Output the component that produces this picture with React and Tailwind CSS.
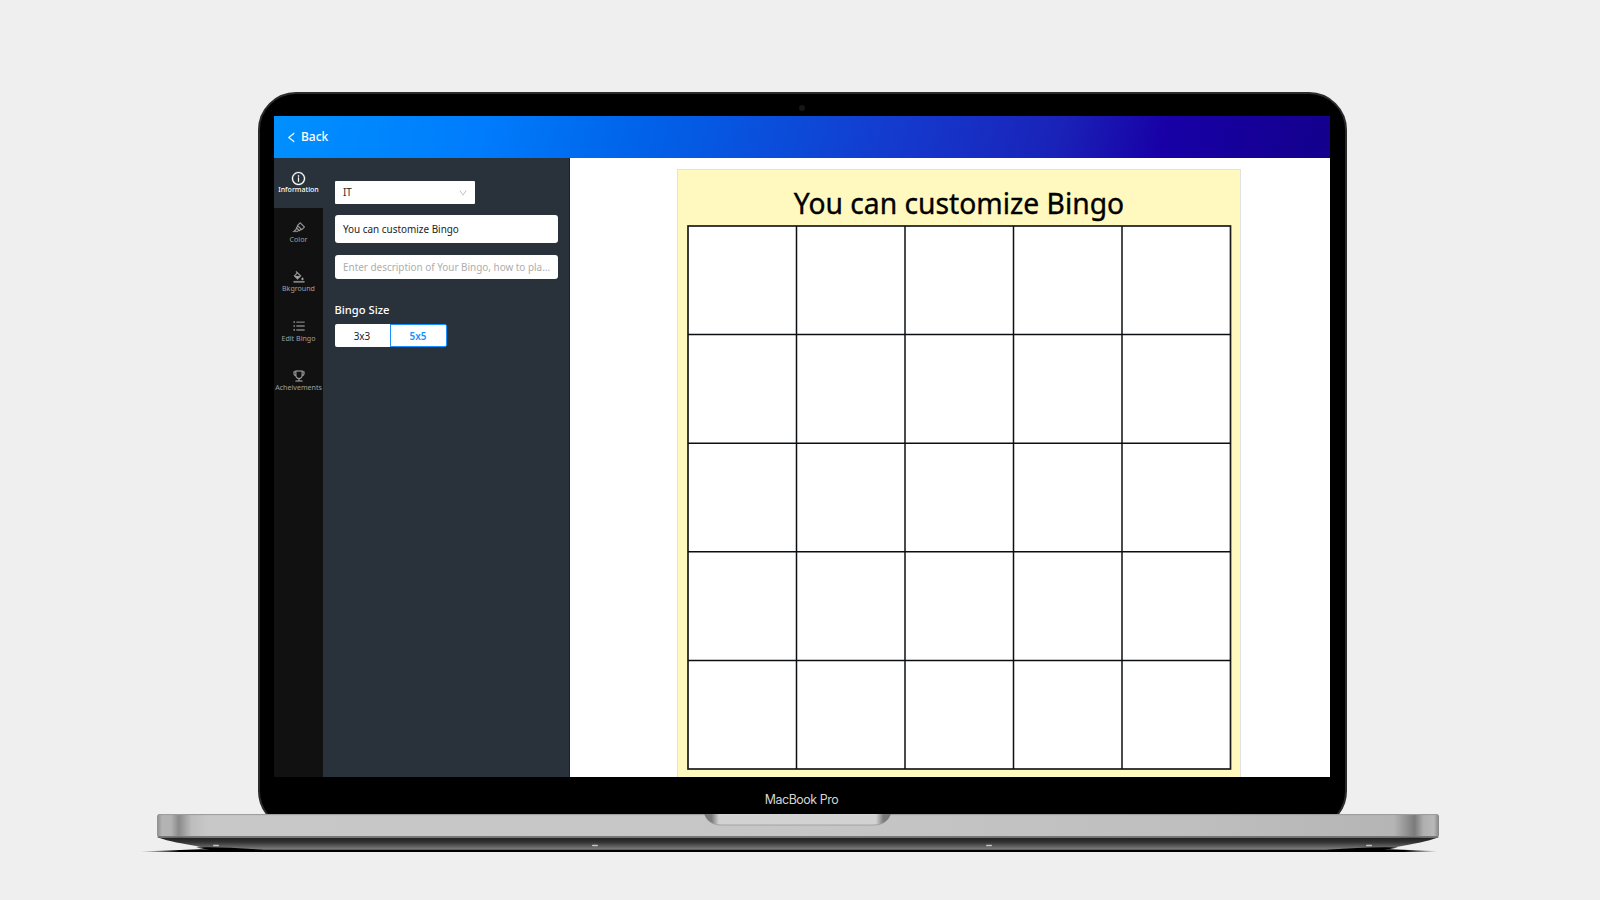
import {
  AiOutlineInfoCircle,
  AiOutlineHighlight,
  AiOutlineBgColors,
  AiOutlineUnorderedList,
  AiOutlineTrophy,
  AiOutlineLeft,
  AiOutlineDown,
} from "react-icons/ai";

const tabs = [
  { label: "Information", Icon: AiOutlineInfoCircle, active: true },
  { label: "Color", Icon: AiOutlineHighlight },
  { label: "Bkground", Icon: AiOutlineBgColors },
  { label: "Edit Bingo", Icon: AiOutlineUnorderedList },
  { label: "Acheivements", Icon: AiOutlineTrophy },
];

function Tab({ label, Icon, active }) {
  return (
    <button
      className={
        active
          ? "flex h-[49.5px] w-full shrink-0 flex-col items-center bg-[#29313b] pt-[12.5px] font-medium text-white"
          : "flex h-[49.5px] w-full shrink-0 flex-col items-center pt-[12.5px] text-[#a0a0a0]"
      }
    >
      <Icon className={active ? "size-[15px] shrink-0 stroke-white stroke-[20px]" : "size-[14px] shrink-0 stroke-[#a0a0a0] stroke-[12px]"} />
      <span className={active ? "-mt-[0.5px] text-[7px] leading-[10px] whitespace-nowrap" : "-mt-[0.5px] text-[7.1px] leading-[10px] whitespace-nowrap"}>
        {label}
      </span>
    </button>
  );
}

function Sidebar() {
  return <nav className="flex w-[49px] shrink-0 flex-col bg-[#111111]">{tabs.map((t) => <Tab key={t.label} {...t} />)}</nav>;
}

function Panel() {
  return (
    <section className="flex w-[246.5px] shrink-0 flex-col items-start border-r border-[#1a222c] bg-[#29313b] pt-[23px] pl-[11.5px] text-[9.92px] text-[#222222]">
      <div className="flex h-[23px] w-[140px] items-center justify-between rounded-[1px] bg-white pr-[7px] pl-[8.5px]">
        <span>IT</span>
        <AiOutlineDown className="size-[10px] text-[#b5b5b5]" />
      </div>
      <div className="mt-[11px] flex h-[28px] w-[223px] items-center rounded-[3px] bg-white px-[8.5px] pt-px">You can customize Bingo</div>
      <div className="mt-[12px] flex h-[24px] w-[223px] items-center rounded-[3px] bg-white px-[8.5px] pt-px whitespace-nowrap text-[#adadad]">
        Enter description of Your Bingo, how to pla...
      </div>
      <h2 className="mt-[23px] text-[11.2px] leading-[16px] font-medium text-white">Bingo Size</h2>
      <div className="mt-[6px] flex h-[23px] w-[112px]">
        <button className="flex flex-1 items-center justify-center rounded-l-[2px] bg-white pt-px">3x3</button>
        <button className="flex w-[57px] items-center justify-center rounded-r-[2px] border border-[#1890ff] bg-white pt-px font-semibold text-[#1890ff]">
          5x5
        </button>
      </div>
    </section>
  );
}

function BingoCard() {
  return (
    <div className="mt-[11px] ml-[107.5px] h-[620px] w-[564px] shrink-0 border border-[#e2e2e2] bg-[#fff8bf]">
      <h1 className="flex h-[55px] items-center justify-center pt-[12px] text-[28.25px] whitespace-nowrap text-black [-webkit-text-stroke:0.35px_black]">
        You can customize Bingo
      </h1>
      <svg className="ml-[9px] block" width="545" height="545" viewBox="0 0 545 545">
        <rect x="1" y="1" width="542.5" height="543" fill="#fff" stroke="#1c1c1c" strokeWidth="1.7" />
        {[1, 2, 3, 4].map((i) => (
          <g key={i} stroke="#0c0f12" strokeWidth="1.5">
            <path d={`M${1 + i * 108.5} 1V544`} />
            <path d={`M1 ${1 + i * 108.6}H543.5`} />
          </g>
        ))}
      </svg>
    </div>
  );
}

function Base() {
  return (
    <svg className="ml-[140px] block shrink-0" width="1310" height="42" viewBox="0 0 1310 42">
      <defs>
        <linearGradient id="metal" x1="17" x2="1299" y1="0" y2="0" gradientUnits="userSpaceOnUse">
          <stop offset="0" stopColor="#8f8f8f" />
          <stop offset=".004" stopColor="#b4b4b4" />
          <stop offset=".011" stopColor="#b2b2b2" />
          <stop offset=".017" stopColor="#8a8a8a" />
          <stop offset=".027" stopColor="#bdbdbd" />
          <stop offset=".04" stopColor="#c8c8c8" />
          <stop offset=".5" stopColor="#c6c6c6" />
          <stop offset=".8" stopColor="#bfbfbf" />
          <stop offset=".965" stopColor="#b5b5b5" />
          <stop offset=".981" stopColor="#7b7b7b" />
          <stop offset=".988" stopColor="#b0b0b0" />
          <stop offset=".996" stopColor="#b8b8b8" />
          <stop offset="1" stopColor="#858585" />
        </linearGradient>
        <linearGradient id="under" x1="0" x2="0" y1="0" y2="1">
          <stop offset="0" stopColor="#1d1d1d" />
          <stop offset=".4" stopColor="#333" />
          <stop offset="1" stopColor="#868686" />
        </linearGradient>
        <linearGradient id="notch" x1="0" x2="1" y1="0" y2="0">
          <stop offset="0" stopColor="#777" />
          <stop offset=".04" stopColor="#7c7c7c" />
          <stop offset=".08" stopColor="#d2d2d2" />
          <stop offset=".92" stopColor="#d2d2d2" />
          <stop offset=".96" stopColor="#7c7c7c" />
          <stop offset="1" stopColor="#777" />
        </linearGradient>
        <linearGradient id="shadow" x1="0" x2="1310" y1="0" y2="0" gradientUnits="userSpaceOnUse">
          <stop offset="0" stopColor="#000" stopOpacity="0" />
          <stop offset=".03" stopColor="#000" />
          <stop offset=".965" stopColor="#000" />
          <stop offset=".99" stopColor="#000" stopOpacity="0" />
        </linearGradient>
      </defs>
      <path d="M17 23H1299Q1290 27 1262 32L1240 36H72L56 32Q26 27 17 23Z" fill="url(#under)" />
      <path d="M0 37.4L60 35.2L120 35.8H1190L1250 35.2L1308 37.4V38H0Z" fill="url(#shadow)" />
      <path d="M56 33.4Q84 32.6 122 35.8L130 38H70V36Z" fill="#000" />
      <path d="M1258 33.4Q1226 32.6 1188 35.8L1180 38H1244V36Z" fill="#000" />
      <path d="M17 2Q17 .4 19 .4H1297Q1299 .4 1299 2V21Q1299 23.4 1296 23.4H20Q17 23.4 17 21Z" fill="url(#metal)" />
      <path d="M18 .6H1298" stroke="#999" />
      <path d="M18 22.7H1298" stroke="#777" strokeWidth="1.2" />
      <path d="M564 0H751Q747 11 734 11H581Q568 11 564 0Z" fill="url(#notch)" />
      <path d="M566 4Q571 11 581 11H734Q744 11 749 4" fill="none" stroke="#999" strokeWidth=".8" />
      {[76, 455, 849, 1229].map((x) => (
        <rect key={x} x={x - 3} y="30.8" width="6" height="1.5" rx=".7" fill="#c4c4c4" />
      ))}
    </svg>
  );
}

export default function App() {
  return (
    <main className="flex h-[900px] w-[1600px] flex-col overflow-hidden bg-[#efefef] pt-[92px] font-['Noto_Sans',sans-serif]">
      <div className="ml-[258px] h-[722px] w-[1089px] shrink-0 overflow-hidden">
        <div className="flex h-[737px] flex-col rounded-[38px] border-2 border-[#2a2b2d] bg-black px-[14px]">
          <div className="flex h-[22px] shrink-0 items-center justify-center pt-[6px] pr-[2px]">
            <span className="size-[6px] rounded-full bg-[#161616]" />
          </div>
          <div className="flex h-[661px] w-[1056px] shrink-0 flex-col overflow-hidden bg-white">
            <header className="flex h-[42px] shrink-0 items-center bg-[linear-gradient(105deg,#0090ff_0%,#007cfc_20%,#0064ea_34%,#1538cc_60%,#1a22b8_74%,#1800a6_84%,#14008c_100%)] pl-[11px] text-white">
              <AiOutlineLeft className="size-[13px] stroke-white stroke-[20px]" />
              <span className="ml-[3px] text-[12px] font-medium">Back</span>
            </header>
            <div className="flex min-h-0 flex-1">
              <Sidebar />
              <Panel />
              <div className="flex min-w-0 flex-1 items-start overflow-hidden bg-white">
                <BingoCard />
              </div>
            </div>
          </div>
          <div className="flex h-[37px] shrink-0 items-center justify-center pt-[9px] pr-[2px] font-['Inter',sans-serif] text-[12.4px] tracking-[-0.45px] text-[#d5d5d5]">
            MacBook Pro
          </div>
        </div>
      </div>
      <Base />
    </main>
  );
}
